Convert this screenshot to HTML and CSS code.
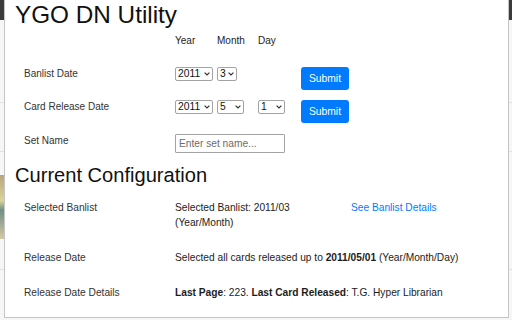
FILE: index.html
```html
<!DOCTYPE html>
<html lang="en">
<head>
    <meta charset="UTF-8">
    <meta name="viewport" content="width=device-width, initial-scale=1.0">
    <title>YGO DN Utility</title>
    <link rel="stylesheet" href="styles.css">
</head>
<body>
    <!-- page behind the popup -->
    <div class="thumb"></div>

    <div class="popup">
        <h1 class="title">YGO DN Utility</h1>

        <form class="settings">
            <span></span>
            <span class="col-head">Year</span>
            <span class="col-head">Month</span>
            <span class="col-head">Day</span>
            <span></span>

            <label class="field-label" for="banYear">Banlist Date</label>
            <span class="select-wrap w-year">
                <select id="banYear"><option>2011</option></select>
                <svg class="chev" width="6" height="4" viewBox="0 0 6 4"><polyline points="0.6,0.6 3,3 5.4,0.6"/></svg>
            </span>
            <span class="select-wrap w-short">
                <select><option>3</option></select>
                <svg class="chev" width="6" height="4" viewBox="0 0 6 4"><polyline points="0.6,0.6 3,3 5.4,0.6"/></svg>
            </span>
            <span></span>
            <button type="button" class="btn">Submit</button>

            <label class="field-label" for="relYear">Card Release Date</label>
            <span class="select-wrap w-year">
                <select id="relYear"><option>2011</option></select>
                <svg class="chev" width="6" height="4" viewBox="0 0 6 4"><polyline points="0.6,0.6 3,3 5.4,0.6"/></svg>
            </span>
            <span class="select-wrap w-mid">
                <select><option>5</option></select>
                <svg class="chev" width="6" height="4" viewBox="0 0 6 4"><polyline points="0.6,0.6 3,3 5.4,0.6"/></svg>
            </span>
            <span class="select-wrap w-mid">
                <select><option>1</option></select>
                <svg class="chev" width="6" height="4" viewBox="0 0 6 4"><polyline points="0.6,0.6 3,3 5.4,0.6"/></svg>
            </span>
            <button type="button" class="btn">Submit</button>

            <label class="field-label" for="setName">Set Name</label>
            <input type="text" id="setName" class="set-input" placeholder="Enter set name...">
        </form>

        <h2 class="section-title">Current Configuration</h2>

        <div class="config">
            <span class="config-label">Selected Banlist</span>
            <span class="config-value narrow">Selected Banlist: 2011/03 (Year/Month)</span>
            <a href="#" class="config-link">See Banlist Details</a>

            <span class="config-label">Release Date</span>
            <span class="config-value">Selected all cards released up to <b>2011/05/01</b> (Year/Month/Day)</span>

            <span class="config-label">Release Date Details</span>
            <span class="config-value"><b>Last Page</b>: 223. <b>Last Card Released</b>: T.G. Hyper Librarian</span>
        </div>
    </div>
</body>
</html>
```

FILE: styles.css
```css
/* Base styles */
body {
    margin: 0;
    height: 320px;
    overflow: hidden;
    font-family: 'Liberation Sans', Arial, sans-serif;
    font-size: 10px;
    color: #1c1c1c;
    background:
        linear-gradient(#3b3b3b 0 20px, transparent 20px),
        linear-gradient(transparent 102px, #e2e2e2 102px 103px, transparent 103px),
        linear-gradient(transparent 151px, #e2e2e2 151px 152px, transparent 152px),
        linear-gradient(transparent 269px, #e2e2e2 269px 270px, transparent 270px),
        #f6f6f6;
}

.thumb {
    position: absolute;
    left: 0;
    top: 175px;
    width: 4px;
    height: 64px;
    background: linear-gradient(#b9a57c, #d9d49a 40%, #6f8f86 55%, #d6c9a0);
}

.popup {
    position: relative;
    margin-left: 4px;
    width: 505px;
    height: 318px;
    box-sizing: border-box;
    padding: 0 10px;
    background-color: #fff;
    border: 1px solid #c4c4c4;
    border-top: none;
}

.title {
    margin: 0 0 4px;
    font-size: 24.3px;
    line-height: 30px;
    font-weight: 400;
    color: #111;
}

/* Settings form */
.settings {
    display: grid;
    grid-template-columns: 151px 42px 41px 43px auto;
    grid-template-rows: 33px 33px 34px auto;
    align-items: start;
    padding-left: 9px;
}

.col-head {
    line-height: 13px;
}

.field-label {
    line-height: 14px;
    color: #333;
}

.select-wrap {
    position: relative;
    display: inline-block;
    height: 14px;
}

.select-wrap select {
    appearance: none;
    -webkit-appearance: none;
    width: 100%;
    height: 14px;
    box-sizing: border-box;
    margin: 0;
    padding: 0 0 0 2px;
    font-family: inherit;
    font-size: 10.3px;
    line-height: 12px;
    color: #111;
    background-color: #fff;
    border: 1px solid #a3a3a3;
    border-radius: 2px;
}

.w-year { width: 38px; }
.w-short { width: 20px; }
.w-mid { width: 27px; }

.chev {
    position: absolute;
    right: 3px;
    top: 5px;
    pointer-events: none;
}

.chev polyline {
    fill: none;
    stroke: #333;
    stroke-width: 1.2;
}

.btn {
    width: 48px;
    height: 23px;
    padding: 0;
    font-family: inherit;
    font-size: 10.3px;
    color: #fff;
    background-color: #007bff;
    border: none;
    border-radius: 3px;
}

.set-input {
    grid-column: span 3;
    width: 110px;
    height: 19px;
    box-sizing: border-box;
    margin: 0;
    padding: 0 3px;
    font-family: inherit;
    font-size: 10.2px;
    border: 1px solid #a3a3a3;
    border-radius: 1px;
}

.set-input::placeholder {
    color: #6c6c6c;
}

/* Current configuration */
.section-title {
    margin: 10px 0 13px;
    font-size: 20.1px;
    line-height: 24px;
    font-weight: 400;
    color: #111;
}

.config {
    display: grid;
    grid-template-columns: 151px 176px 1fr;
    row-gap: 20px;
    padding-left: 9px;
    line-height: 15px;
    font-size: 10.2px;
}

.config-label {
    color: #333;
}

.config-value {
    grid-column: span 2;
}

.config-value.narrow {
    grid-column: span 1;
    padding-right: 16px;
}

.config-link {
    color: #007bff;
    text-decoration: none;
}
```
